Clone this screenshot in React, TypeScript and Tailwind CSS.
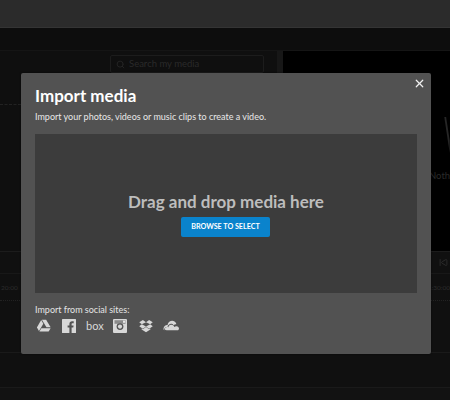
import React from "react";
import { Search, X, SkipBack } from "lucide-react";

function Drive() {
  return (
    <svg viewBox="0 0 16 14" className="w-[14px] h-[13px]" fill="#d8d8d8">
      <path d="M5.6 0.5h4.8l5.2 8.6h-4.8z" />
      <path d="M4.800 .8l2.400 4.200-2.500 4.300-2.500 4.100-2.300-4.200z" />
      <path d="M5 10h10.600l-2.300 3.800H2.700z" />
    </svg>
  );
}

function Facebook() {
  return (
    <svg viewBox="0 0 14 14" className="ml-[1px] w-[14px] h-[14px]">
      <rect width="14" height="14" rx="0.5" fill="#d8d8d8" />
      <path d="M9.600 14V8.600h1.700l.3-2.100h-2V5.200c0-.6.2-1 1-1h1.100V2.300c-.2 0-.8-.1-1.600-.1-1.600 0-2.700 1-2.700 2.800v1.500H5.600v2.100h1.800V14z" fill="#525252" />
    </svg>
  );
}

function Instagram() {
  return (
    <svg viewBox="0 0 14 14" className="w-[14px] h-[14px]">
      <rect width="14" height="14" rx="1" fill="#d8d8d8" />
      <rect x="1.500" y="1.200" width="11" height="3.600" fill="#8a8a8a" />
      <rect x="10" y="1.600" width="2.200" height="2.200" fill="#e8e8e8" />
      <circle cx="7" cy="7.600" r="3.400" fill="#525252" />
      <circle cx="7" cy="7.600" r="2.100" fill="#d8d8d8" />
    </svg>
  );
}

function Dropbox() {
  return (
    <svg viewBox="0 0 16 15" className="ml-[2px] w-[14px] h-[14px]" fill="#d8d8d8">
      <path d="M4.400 .5L.3 3.200l2.900 2.300L8 3.100z" />
      <path d="M11.600 .5L8 3.100l4.800 2.400 2.900-2.300z" />
      <path d="M3.200 5.500L.3 7.900l4.100 2.600L8 8z" />
      <path d="M12.800 5.500L8 8l3.600 2.500 4.100-2.600z" />
      <path d="M8 8.700l-3.600 2.500-1.400-.9v1.200L8 14.500l5-3v-1.200l-1.400.9z" />
    </svg>
  );
}

function OneDrive() {
  return (
    <svg viewBox="0 0 17 11" className="w-[16px] h-[11px]" fill="#d8d8d8">
      <path d="M4.800 4.500C5.500 2 7.600.4 9.800.4c1.800 0 3.400 1 4.100 2.600l.2 1.300c-1.100-.1-2 .2-2.800.9-1-1.300-2.400-1.700-3.600-1.400-1 .2-1.700.7-2.100 1.500z" />
      <path d="M4 10.600h12c.6-.4 1-1.100 1-1.900 0-1.500-1.300-2.700-2.900-2.500-.8 0-1.500.3-2 .9-.7-1.700-2.100-2.600-3.600-2.400-1.500.2-2.600 1.300-2.800 2.600-1.200-.5-2.200-.3-2.900.2C1.500 8.400 1.600 10.300 4 10.600z" />
      <path d="M4.400 4.900C2.500 5 .9 6.600.6 8.500c-.2 1 .1 1.700.7 2.100-.2-1.700.6-3.300 3.500-3.500.1-.9.400-1.400.8-1.900z" />
    </svg>
  );
}

export default function App() {
  return (
    <div className="relative w-[450px] h-[400px] overflow-hidden bg-[#101010] font-['Lato','Open_Sans',sans-serif]">
      <div className="h-[27px] bg-[#2b2b2b] border-b border-[#343434] box-content" />
      <div className="h-[22px] bg-[#0d0d0d] border-b border-[#151515] box-content" />

      <div className="flex h-[200px]">
        <div className="w-[277px] shrink-0 bg-[#0f0f0f] pt-[4px] pl-[110px]">
          <div className="flex items-center gap-[4px] w-[154px] h-[18px] border border-[#1c1c1c] rounded-[2px] px-[5px] text-[9.5px] text-[#2a2a2a]">
            <Search size={9} strokeWidth={2} className="shrink-0" />
            <span>Search my media</span>
          </div>
          <div className="mt-[31px] -ml-[110px] w-[21px] border-t border-dashed border-[#222222]" />
        </div>
        <div className="w-[6px] shrink-0 bg-[#171717]" />
        <div className="relative flex-1 overflow-hidden bg-black pl-[146px] pt-[118px] text-[9.5px] text-[#2a2a2a]">
          <span className="whitespace-nowrap">Nothing</span>
          <svg viewBox="0 0 6 40" className="absolute left-[161px] top-[66px] w-[6px] h-[36px]" fill="#262626">
            <path d="M0 0h2l4 26v14z" />
          </svg>
        </div>
      </div>

      <div className="h-[21px] border-t border-[#1c1c1c] bg-[#101010] flex justify-end items-center pr-[2px] box-content">
        <SkipBack size={9} className="text-[#333333]" />
      </div>
      <div className="h-[69px] border-t border-[#181818] pt-[9px] box-content">
        <div className="flex justify-between text-[6.5px] leading-[9px] text-[#2c2c2c]">
          <span className="pl-[1px]">20:00</span>
          <span className="whitespace-nowrap">01:30:00</span>
        </div>
        <div className="mt-[8px] border-t border-dotted border-[#222222]" />
      </div>
      <div className="h-[34px] border-t border-[#1a1a1a] bg-[#101010] box-content" />
      <div className="h-[15px] border-t border-[#1a1a1a] bg-[#121212] box-content" />
      <div className="h-[7px] bg-[#1b1b1b]" />

      <div className="absolute left-[21px] top-[73px] w-[410px] h-[281px] bg-[#525252] rounded-[2px] px-[14px] pt-[12px] shadow-[0_0_2px_rgba(0,0,0,0.6)]">
        <button className="absolute right-[5px] top-[4px] text-[#f0f0f0]" aria-label="Close">
          <X size={13} strokeWidth={2.2} />
        </button>
        <h1 className="text-[17px] leading-[22px] font-bold text-white">Import media</h1>
        <p className="mt-[4px] text-[9px] leading-[12px] text-[#e8e8e8]">
          Import your photos, videos or music clips to create a video.
        </p>
        <div className="mt-[11px] h-[159px] bg-[#3c3c3c] flex flex-col items-center pt-[56px]">
          <div className="text-[17px] leading-[23px] font-bold text-[#bdbdbd]">Drag and drop media here</div>
          <button className="mt-[4px] mr-[1px] w-[89px] h-[20px] rounded-[2px] bg-[#0a83cc] text-white text-[7.2px] font-bold uppercase">
            Browse to select
          </button>
        </div>
        <div className="mt-[11px] text-[9px] leading-[12px] text-[#e4e4e4]">Import from social sites:</div>
        <div className="mt-[2px] ml-[2px] flex items-center gap-[10px] h-[15px]">
          <Drive />
          <Facebook />
          <span className="w-[17px] text-[11px] leading-[14px] text-[#d8d8d8]">box</span>
          <Instagram />
          <Dropbox />
          <OneDrive />
        </div>
      </div>
    </div>
  );
}
